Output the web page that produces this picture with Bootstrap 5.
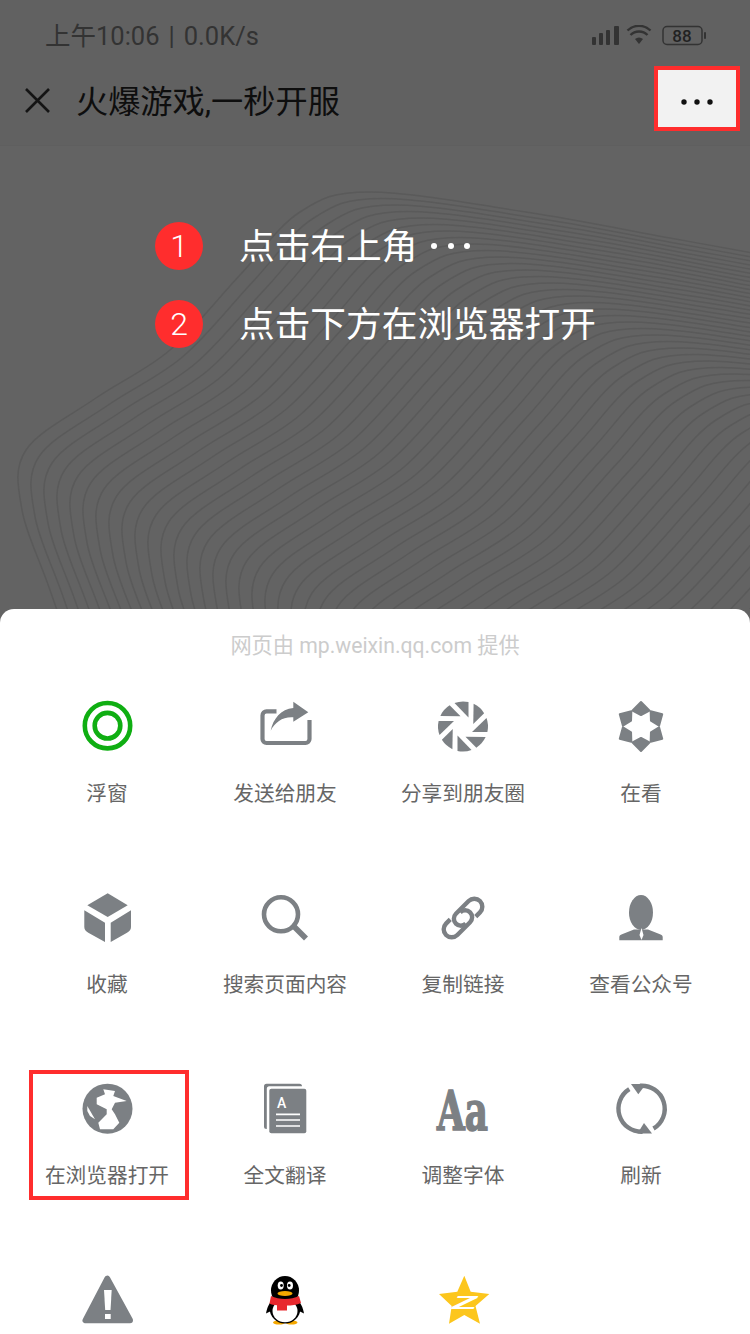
<!DOCTYPE html>
<html lang="zh-CN">
<head>
  <meta charset="UTF-8" />
  <meta name="viewport" content="width=device-width, initial-scale=1.0" />
  <title>火爆游戏,一秒开服</title>
  <link href="https://cdn.jsdelivr.net/npm/bootstrap@5.3.0/dist/css/bootstrap.min.css" rel="stylesheet" />
  <style>
    body {
      width: 750px;
      height: 1334px;
      overflow: hidden;
      background-color: #636363;
      font-family: Roboto, "Noto Sans CJK SC", sans-serif;
    }

    .phone {
      height: 1334px;
    }

    .status-bar {
      height: 66px;
      padding: 5px 43px 0 45px;
      background-color: #616161;
      color: #333;
      font-size: 25.5px;
      line-height: 30px;
    }

    .status-sep {
      margin: 0 9px;
    }

    .title-bar {
      height: 80px;
      background-color: #616161;
      border-bottom: 1px solid #5f5f5f;
    }

    .close-icon {
      margin-left: 24px;
      margin-right: 25px;
      margin-bottom: 10px;
    }

    .title-text {
      color: #0e0e0e;
      font-size: 32.2px;
      line-height: 40px;
      margin-bottom: 8px;
    }

    .more-box {
      width: 86px;
      height: 65px;
      margin-right: 10px;
      margin-bottom: 15px;
      background-color: #f2f2f2;
      border: 4px solid #ff2d2d;
    }

    .more-dots {
      margin-top: 8px;
    }

    .guide {
      min-height: 0;
      padding: 76px 0 0 155px;
    }

    .wave-bg {
      top: 0;
      left: 0;
    }

    .step {
      height: 48px;
      margin-bottom: 30px;
    }

    .step-num {
      width: 48px;
      height: 48px;
      margin-right: 36px;
      background-color: #ff2d2d;
      color: #fff;
      font-size: 32px;
      font-weight: 300;
    }

    .step-text {
      color: #fff;
      font-size: 35.7px;
      line-height: 48px;
      margin-top: 2px;
    }

    .step-dots {
      margin-left: 13px;
    }

    .sheet {
      height: 725px;
      background-color: #fff;
      border-radius: 14px 14px 0 0;
    }

    .sheet-from {
      height: 88px;
      padding-top: 22px;
      color: #ccc;
      font-size: 21.2px;
      line-height: 30px;
    }

    .sheet-grid {
      width: 712px;
      margin-left: 18px;
    }

    .sheet-cell {
      height: 190.9px;
    }

    .sheet-cell svg {
      display: block;
      margin: 0 auto;
      overflow: visible;
    }

    .sheet-label {
      margin-top: 22px;
      color: #666;
      font-size: 20.7px;
      line-height: 30px;
    }

    .mark-box {
      top: -9px;
      left: 11px;
      width: 160px;
      height: 130px;
      border: 4px solid #ff2d2d;
    }

    .ic {
      fill: #7c8084;
    }

    .ic-line {
      fill: none;
      stroke: #7c8084;
    }
  </style>
</head>
<body>
  <div class="phone d-flex flex-column">
    <!-- status bar -->
    <div class="status-bar d-flex align-items-center">
      <span>上午10:06<span class="status-sep">|</span>0.0K/s</span>
      <svg class="ms-auto" width="115" height="22" viewBox="0 0 115 22">
        <g fill="#333">
          <rect x="0" y="12" width="4" height="8" rx="1" />
          <rect x="7" y="8" width="4" height="12" rx="1" />
          <rect x="14" y="5" width="4" height="15" rx="1" />
          <rect x="22" y="1" width="5" height="19" rx="1" />
          <path d="M47 19l-4-5a6 6 0 0 1 8 0z" />
        </g>
        <g fill="none" stroke="#333" stroke-width="2.4">
          <path d="M38.500 10a12 12 0 0 1 17 0" />
          <path d="M35.500 5.500a16.500 16.500 0 0 1 23 0" />
          <rect x="71" y="1.500" width="39" height="18" rx="4" stroke-width="1.500" />
        </g>
        <rect x="112" y="7" width="2" height="7" rx="1" fill="#333" />
        <text x="90" y="16.500" text-anchor="middle" font-family="Roboto, sans-serif" font-size="17" font-weight="500" fill="#222">88</text>
      </svg>
    </div>

    <!-- title bar -->
    <div class="title-bar d-flex align-items-center">
      <svg class="close-icon" width="27" height="27" viewBox="0 0 27 27">
        <path d="M2 2l23 23M25 2L2 25" stroke="#141414" stroke-width="2.600" fill="none" />
      </svg>
      <span class="title-text">火爆游戏,一秒开服</span>
      <div class="more-box ms-auto d-flex align-items-center justify-content-center">
        <svg width="34" height="8" viewBox="0 0 34 8" class="more-dots">
          <circle cx="4" cy="4" r="2.700" fill="#111" />
          <circle cx="17" cy="4" r="2.700" fill="#111" />
          <circle cx="30" cy="4" r="2.700" fill="#111" />
        </svg>
      </div>
    </div>

    <!-- guide -->
    <div class="guide flex-grow-1 position-relative">
      <svg id="waves" class="wave-bg position-absolute" width="750" height="463" viewBox="0 146 750 463"></svg>
      <div class="step d-flex align-items-center position-relative">
        <span class="step-num rounded-circle d-flex align-items-center justify-content-center">1</span>
        <span class="step-text">点击右上角</span>
        <svg class="step-dots" width="40" height="8" viewBox="0 0 40 8">
          <circle cx="4" cy="4" r="3" fill="#fff" />
          <circle cx="21" cy="4" r="3" fill="#fff" />
          <circle cx="37" cy="4" r="3" fill="#fff" />
        </svg>
      </div>
      <div class="step d-flex align-items-center position-relative">
        <span class="step-num rounded-circle d-flex align-items-center justify-content-center">2</span>
        <span class="step-text">点击下方在浏览器打开</span>
      </div>
    </div>

    <!-- share sheet -->
    <div class="sheet flex-shrink-0 overflow-hidden">
      <div class="sheet-from text-center">网页由 mp.weixin.qq.com 提供</div>
      <div class="sheet-grid row g-0">
        <div class="col-3 sheet-cell text-center">
          <svg width="60" height="60" viewBox="0 0 60 60">
            <circle cx="30.500" cy="28.700" r="22.700" fill="none" stroke="#0fae12" stroke-width="4.600" />
            <circle cx="30.500" cy="28.700" r="12.800" fill="none" stroke="#0fae12" stroke-width="4.600" />
          </svg>
          <div class="sheet-label">浮窗</div>
        </div>
        <div class="col-3 sheet-cell text-center">
          <svg width="60" height="60" viewBox="0 0 60 60">
            <path class="ic-line" stroke-width="4.200" d="M21.500 14.400H11.500a4 4 0 0 0-4 4V42a4 4 0 0 0 4 4H50.500a4 4 0 0 0 4-4V23" />
            <path class="ic" d="M38.300 4.700L53.300 15.300L38.300 24.700V20.300C28 19.500 20 25 15.700 33.700C18 22 26 12 38.300 11Z" />
          </svg>
          <div class="sheet-label">发送给朋友</div>
        </div>
        <div class="col-3 sheet-cell text-center">
          <svg width="60" height="60" viewBox="0 0 60 60">
            <g class="ic" transform="translate(30 29.500)">
              <path id="blade" d="M-8.500-23.500A25 25 0 0 1 5.500-24.400V-9Z" />
              <use href="#blade" transform="rotate(45)" />
              <use href="#blade" transform="rotate(90)" />
              <use href="#blade" transform="rotate(135)" />
              <use href="#blade" transform="rotate(180)" />
              <use href="#blade" transform="rotate(225)" />
              <use href="#blade" transform="rotate(270)" />
              <use href="#blade" transform="rotate(315)" />
            </g>
          </svg>
          <div class="sheet-label">分享到朋友圈</div>
        </div>
        <div class="col-3 sheet-cell text-center">
          <svg width="60" height="60" viewBox="0 0 60 60">
            <g class="ic" transform="translate(30 29.500)" stroke="#7c8084" stroke-width="2" stroke-linejoin="round">
              <path id="kite" d="M0-24.500L8.400-16L0-11.500L-8.400-16Z" />
              <use href="#kite" transform="rotate(60)" />
              <use href="#kite" transform="rotate(120)" />
              <use href="#kite" transform="rotate(180)" />
              <use href="#kite" transform="rotate(240)" />
              <use href="#kite" transform="rotate(300)" />
            </g>
          </svg>
          <div class="sheet-label">在看</div>
        </div>

        <div class="col-3 sheet-cell text-center">
          <svg width="60" height="60" viewBox="0 0 60 60">
            <path class="ic" d="M30.700 5.300L50.700 17.300L30.700 29L10.300 17.300Z" />
            <path class="ic" d="M7.300 22.300L28 34.700V54L11.300 44.700Q7.300 42.500 7.300 39Z" />
            <path class="ic" d="M33.700 34.700L54 22.300V39Q54 42.500 50 44.700L33.700 54Z" />
          </svg>
          <div class="sheet-label">收藏</div>
        </div>
        <div class="col-3 sheet-cell text-center">
          <svg width="60" height="60" viewBox="0 0 60 60">
            <circle class="ic-line" cx="26" cy="26.300" r="17" stroke-width="4.600" />
            <path class="ic-line" d="M39 38.500L51 50.500" stroke-width="5.600" />
          </svg>
          <div class="sheet-label">搜索页面内容</div>
        </div>
        <div class="col-3 sheet-cell text-center">
          <svg width="60" height="60" viewBox="0 0 60 60">
            <g class="ic-line" stroke-width="4.400" transform="translate(30 30) rotate(-45)">
              <path d="M10 8H16A8 8 0 0 0 16-8H-2A7 7 0 0 0-2 6" />
              <path d="M-10-8H-16A8 8 0 0 0-16 8H2A7 7 0 0 0 2-6" />
            </g>
          </svg>
          <div class="sheet-label">复制链接</div>
        </div>
        <div class="col-3 sheet-cell text-center">
          <svg width="60" height="60" viewBox="0 0 60 60">
            <ellipse class="ic" cx="30" cy="24.500" rx="12" ry="17.500" />
            <path class="ic" d="M8.300 52.300V49C8.300 47.500 9.500 46.800 11 46.300L23 41.500H37L49 46.300C50.500 46.800 51.700 47.500 51.700 49V52.300Z" />
            <path d="M30.500 40L32.500 47L30.500 52L28.500 47Z" fill="#fff" />
          </svg>
          <div class="sheet-label">查看公众号</div>
        </div>

        <div class="col-3 sheet-cell text-center position-relative">
          <svg width="60" height="60" viewBox="0 0 60 60">
            <circle class="ic" cx="30.500" cy="29.700" r="25" />
            <path fill="#fff" d="M26.300 10.300L38 12L36.300 17L49.700 22L38 23.700L34.700 30.300L38 35.300L42.300 43.700L36.300 50.300H23L21.300 43.700L29.700 35.300V30.300L19.700 25.300V18.700L28 15.300Z" />
            <path fill="#fff" d="M10.300 27L18 40.300L13 37L10.300 32Z" />
          </svg>
          <div class="sheet-label">在浏览器打开</div>
          <div class="mark-box position-absolute"></div>
        </div>
        <div class="col-3 sheet-cell text-center">
          <svg width="60" height="60" viewBox="0 0 60 60">
            <path class="ic" d="M11.500 4.700H44.500A2.500 2.500 0 0 1 47 7.200H14.300A2.500 2.500 0 0 0 11.800 9.700V50H11.500A2.500 2.500 0 0 1 9 47.500V7.200A2.500 2.500 0 0 1 11.500 4.700Z" />
            <rect class="ic" x="14.300" y="9.700" width="37" height="44.600" rx="2" />
            <text x="26.700" y="28.500" text-anchor="middle" fill="#fff" font-family="Roboto, sans-serif" font-size="14" font-weight="500">A</text>
            <path d="M21 35.300H45M21 41H45M21 47H45" stroke="#fff" stroke-width="1.700" fill="none" />
          </svg>
          <div class="sheet-label">全文翻译</div>
        </div>
        <div class="col-3 sheet-cell text-center">
          <svg width="60" height="60" viewBox="0 0 60 60">
            <text x="4" y="51" class="ic" stroke="#7c8084" stroke-width="1.600" font-family="'DejaVu Serif', serif" font-weight="700" font-size="54" textLength="51" lengthAdjust="spacingAndGlyphs">Aa</text>
          </svg>
          <div class="sheet-label">调整字体</div>
        </div>
        <div class="col-3 sheet-cell text-center">
          <svg width="60" height="60" viewBox="0 0 60 60">
            <path class="ic-line" stroke-width="4.400" d="M29 6.800A23 23 0 0 1 42.500 49.500" />
            <path class="ic-line" stroke-width="4.400" d="M18.300 10.200A23 23 0 0 0 31.500 52.700" />
            <path class="ic" d="M20 5L35 5L27.300 15.300Z" />
            <path class="ic" d="M41 54.500L26.500 54.500L33 44Z" />
          </svg>
          <div class="sheet-label">刷新</div>
        </div>

        <div class="col-3 sheet-cell text-center">
          <svg width="60" height="60" viewBox="0 0 60 60">
            <path class="ic" stroke="#7c8084" stroke-width="6" stroke-linejoin="round" d="M30.300 8.700L8.500 50.300H53Z" />
            <path fill="#fff" d="M27 20H34.700L33.500 40H28.200Z" />
            <rect x="28" y="44" width="5.700" height="5" fill="#fff" />
          </svg>
        </div>
        <div class="col-3 sheet-cell text-center">
          <svg width="60" height="60" viewBox="0 0 60 60">
            <ellipse cx="24" cy="52.500" rx="6" ry="2" fill="#f5a800" />
            <ellipse cx="36.500" cy="52.500" rx="6" ry="2" fill="#f5a800" />
            <path fill="#000" d="M11 43.500C12 37 15 32 18 29L21 36L16 41Z" />
            <path fill="#000" d="M49 43.500C48 37 45 32 42 29L39 36L44 41Z" />
            <ellipse cx="30" cy="20.500" rx="14" ry="14.500" fill="#000" />
            <ellipse cx="30" cy="38" rx="15.500" ry="15.500" fill="#000" />
            <ellipse cx="30" cy="41" rx="12.500" ry="11.300" fill="#fff" />
            <path fill="#e8282e" d="M16 26C24 30 36 30 44 26L46 33C42 35 36 35.500 32 35.500V40.500H22V35.300C19 35 16 34.500 14.500 33.500Z" />
            <ellipse cx="30" cy="23.500" rx="7.500" ry="2.600" fill="#f5a800" />
            <ellipse cx="25.700" cy="15.500" rx="3" ry="4" fill="#fff" />
            <ellipse cx="35" cy="15.500" rx="3" ry="4" fill="#fff" />
            <circle cx="26.500" cy="15.500" r="1.400" fill="#000" />
            <circle cx="34.200" cy="15.500" r="1.400" fill="#000" />
          </svg>
        </div>
        <div class="col-3 sheet-cell text-center">
          <svg width="60" height="60" viewBox="0 0 60 60">
            <path fill="#fcc61d" d="M31.300 5.700L37.700 21.700L56.300 24L42.500 36L47 53.700L31.300 45L16 53.700L18.700 36L6 24L24.300 21.700Z" />
            <text x="19" y="39" fill="#fff" font-family="'Liberation Sans', sans-serif" font-size="18" font-weight="700" font-style="italic" textLength="25" lengthAdjust="spacingAndGlyphs">Z</text>
          </svg>
        </div>
      </div>
    </div>
  </div>

  <script>
    // contour lines behind the guide text
    const waves = document.getElementById("waves");
    const contorno = [[95,720],[50,590],[22,510],[26,450],[96,398],[170,350],[240,275],[300,212],[370,192],[526,212],[670,238],[780,258]];

    function curva(pontos) {
      let d = `M${pontos[0][0]} ${pontos[0][1]}`;
      for (let i = 0; i < pontos.length - 1; i++) {
        const p0 = pontos[Math.max(i - 1, 0)];
        const p1 = pontos[i];
        const p2 = pontos[i + 1];
        const p3 = pontos[Math.min(i + 2, pontos.length - 1)];
        const c1x = p1[0] + (p2[0] - p0[0]) / 6;
        const c1y = p1[1] + (p2[1] - p0[1]) / 6;
        const c2x = p2[0] - (p3[0] - p1[0]) / 6;
        const c2y = p2[1] - (p3[1] - p1[1]) / 6;
        d += `C${c1x.toFixed(1)} ${c1y.toFixed(1)} ${c2x.toFixed(1)} ${c2y.toFixed(1)} ${p2[0].toFixed(1)} ${p2[1].toFixed(1)}`;
      }
      return d;
    }

    for (let n = 0; n < 60; n++) {
      const pontos = contorno.map(([x, y]) => [x + n * 13, y + n * 6.5]);
      const linha = document.createElementNS("http://www.w3.org/2000/svg", "path");
      linha.setAttribute("d", curva(pontos));
      linha.setAttribute("fill", "none");
      linha.setAttribute("stroke", "#5a5a5a");
      linha.setAttribute("stroke-width", "1.5");
      waves.appendChild(linha);
    }
  </script>
  <script src="https://cdn.jsdelivr.net/npm/bootstrap@5.3.0/dist/js/bootstrap.bundle.min.js"></script>
</body>
</html>
